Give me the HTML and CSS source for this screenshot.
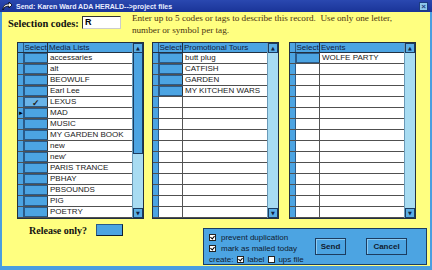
FILE: index.html
```html
<!DOCTYPE html>
<html lang="en">
<head>
    <meta charset="UTF-8">
    <title>Send</title>
    <link rel="stylesheet" href="styles.css">
</head>
<body>
    <div id="window">
        <div class="titlebar">
            <svg class="ticon" width="11" height="10" viewBox="0 0 11 10"><path d="M1 9 C1 5 3 3 7 3 L7 1 L10 4 L7 7 L7 5 C4 5 2 6 1 9 Z" fill="#fff" stroke="#000" stroke-width="0.8"/></svg>
            <span class="ttext">Send: Karen Ward ADA HERALD--&gt;project files</span>
            <span class="close">&#215;</span>
        </div>
        <div class="main">
            <div class="codes">
                <span class="codes-label">Selection codes:</span>
                <div class="codebox">R</div>
                <p class="hint">Enter up to 5 codes or tags to describe this record.&nbsp; Use only one letter,<br>number or symbol per tag.</p>
            </div>
            <div class="lists">
                <div class="list">
                    <div class="grid" id="media"></div>
                    <div class="scroll">
                        <div class="arrow">&#9650;</div>
                        <div class="thumb"></div>
                        <div class="track"></div>
                        <div class="arrow">&#9660;</div>
                    </div>
                </div>
                <div class="list">
                    <div class="grid" id="tours"></div>
                    <div class="scroll">
                        <div class="arrow">&#9650;</div>
                        <div class="track"></div>
                        <div class="arrow">&#9660;</div>
                    </div>
                </div>
                <div class="list">
                    <div class="grid" id="events"></div>
                    <div class="scroll">
                        <div class="arrow">&#9650;</div>
                        <div class="track"></div>
                        <div class="arrow">&#9660;</div>
                    </div>
                </div>
            </div>
            <div class="footer">
                <div class="release">Release only? <span class="rbtn"></span></div>
                <div class="panel">
                    <div class="opts">
                        <div class="opt"><span class="cb on"></span>prevent duplication</div>
                        <div class="opt"><span class="cb on"></span>mark as mailed today</div>
                        <div class="opt create">create:<span class="cb on"></span>label<span class="cb"></span>ups file</div>
                    </div>
                    <div class="btn send">Send</div>
                    <div class="btn cancel">Cancel</div>
                </div>
            </div>
        </div>
    </div>
    <script>
        // build the three list grids
        function fill(id, title, items, rows){
            var g=document.getElementById(id);
            var html='<div class="row head"><span class="ind"></span><span class="sel">Select</span><span class="name">'+title+'</span></div>';
            for(var i=0;i<rows;i++){
                var it=items[i];
                var cls='row';
                var sel='';
                var ind='';
                if(it){cls+=' full';}
                if(it&&it.check){sel='&#10003;';cls+=' picked';}
                if(it&&it.cur){ind='&#9658;';}
                html+='<div class="'+cls+'"><span class="ind">'+ind+'</span><span class="sel">'+sel+'</span><span class="name">'+(it?it.t:'')+'</span></div>';
            }
            g.innerHTML=html;
        }
        function mk(arr){
            return arr.map(function(t){return {t:t};});
        }
        var media=mk(["accessaries","alt","BEOWULF","Earl Lee","LEXUS","MAD","MUSIC","MY GARDEN BOOK","new","new'","PARIS TRANCE","PBHAY","PBSOUNDS","PIG","POETRY"]);
        media[4].check=true;
        media[5].cur=true;
        fill("media","Media Lists",media,15);
        fill("tours","Promotional Tours",mk(["butt plug","CATFISH","GARDEN","MY KITCHEN WARS"]),15);
        fill("events","Events",mk(["WOLFE PARTY"]),15);
    </script>
</body>
</html>
```
FILE: styles.css
```css
*{padding:0;margin:0;box-sizing:border-box;}
body{background:#fff;}
#window{width:432px;height:270px;display:flex;flex-direction:column;overflow:hidden;}
.titlebar{height:12px;background:linear-gradient(#2a48b0,#1a3498);display:flex;align-items:center;padding-left:2px;}
.ticon{flex:none;}
.ttext{font:bold 7px "Liberation Sans",Arial,sans-serif;color:#e8ecff;margin-left:3px;flex:1;white-space:nowrap;}
.close{width:9px;height:9px;margin-right:4px;background:#8ec8ea;border:1px solid #1c3c80;font:bold 8px/7px "Liberation Sans",sans-serif;color:#1c3c80;text-align:center;}
.main{flex:1;background:#ffff80;border-left:2px solid #4a9ee0;border-right:2px solid #4a9ee0;border-bottom:4px solid #4a9ee0;display:flex;flex-direction:column;}
.codes{display:flex;align-items:flex-start;padding-left:6px;height:30px;}
.codes-label{font:bold 10.5px "Liberation Serif","Times New Roman",serif;color:#111;margin-top:6px;white-space:nowrap;}
.codebox{width:39px;height:13px;margin-top:4px;margin-left:3px;background:#fff;border:1px solid #333;border-right-color:#ccc;border-bottom-color:#ccc;font:bold 9px/11px "Liberation Sans",Arial,sans-serif;padding-left:2px;}
.hint{font:9.2px/12px "Liberation Serif","Times New Roman",serif;color:#4a3410;margin-left:11px;white-space:nowrap;}
.lists{display:flex;margin-left:15px;height:177px;}
.list{display:flex;width:127px;height:177px;border:1px solid #233040;background:#fff;}
.list+.list{margin-left:8px;}
.list:last-child{margin-left:10px;}
.grid{flex:1;}
.row{display:flex;height:11px;border-bottom:1px solid #505050;font:8px/10px "Liberation Sans",Arial,sans-serif;color:#222;}
.row span{display:block;height:10px;}
.row .ind{width:6px;background:#4ca4e2;border-right:1px solid #2a5a88;font-size:6px;line-height:10px;color:#000;}
.row .sel{width:24px;border-right:1px solid #555;text-align:center;}
.row.full .sel{background:#4ca4e2;border:1px solid #2a5a88;border-right-color:#333;}
.row.picked .sel{background:#6ab4e8;font-size:9px;font-weight:bold;}
.row .name{flex:1;padding-left:2px;white-space:nowrap;overflow:hidden;}
.row.head{height:10px;background:#4ca4e2;border-bottom:1px solid #233040;color:#102040;}
.row.head span{height:9px;line-height:9px;}
.row.head .sel{background:#4ca4e2;border-right:1px solid #233040;}
.row.head .name{padding-left:1px;}
.scroll{width:11px;display:flex;flex-direction:column;border-left:1px solid #6a9ab8;background:#a8dcf2;}
.arrow{height:10px;background:#5aaee6;border:1px solid #1c3c60;font:5px/8px "DejaVu Sans",sans-serif;color:#102040;text-align:center;}
.thumb{height:101px;background:#4ca4e2;border:1px solid #1c3c60;border-top:none;}
.track{flex:1;}
.footer{flex:1;display:flex;align-items:flex-start;}
.release{margin-left:27px;margin-top:5px;font:bold 10px "Liberation Serif","Times New Roman",serif;color:#111;display:flex;align-items:center;white-space:nowrap;}
.rbtn{display:block;width:27px;height:12px;margin-left:9px;background:#4ca4e2;border:1px solid #2a5a88;border-right-color:#102030;border-bottom-color:#102030;}
.panel{margin-left:auto;margin-right:3px;margin-top:9px;width:224px;height:37px;background:#4ca4e2;border:1px solid #1c3c60;display:flex;align-items:flex-start;padding:3px 0 0 5px;}
.opts{font:8px/11px "Liberation Sans",Arial,sans-serif;color:#102030;width:101px;}
.opt{display:flex;align-items:center;height:11px;white-space:nowrap;}
.cb{display:block;width:7px;height:7px;background:#fff;border:1px solid #222;margin-right:5px;position:relative;}
.cb.on::after{content:"";position:absolute;left:1px;top:0;width:2px;height:3px;border-right:1px solid #000;border-bottom:1px solid #000;transform:rotate(40deg);}
.create .cb{margin-left:4px;margin-right:3px;}
.btn{height:17px;margin-top:6px;background:#4ca4e2;border:1px solid #1c3c60;box-shadow:inset 1px 1px 0 #8cccf4;font:bold 8px/15px "Liberation Sans",Arial,sans-serif;color:#102030;text-align:center;}
.send{width:31px;margin-left:5px;}
.cancel{width:41px;margin-left:20px;}
```
